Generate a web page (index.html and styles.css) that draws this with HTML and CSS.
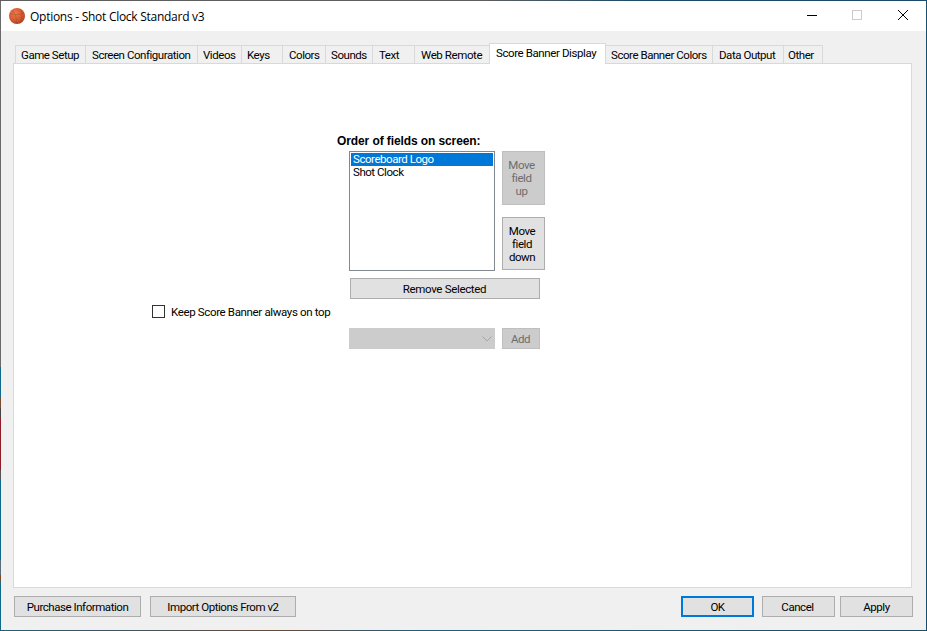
FILE: index.html
```html
<!DOCTYPE html>
<html lang="en">
<head>
<meta charset="utf-8">
<title>Options - Shot Clock Standard v3</title>
<link rel="stylesheet" href="styles.css">
</head>
<body>
<div class="window">
  <header class="titlebar">
    <svg class="app-icon" width="16" height="16" viewBox="0 0 16 16">
      <defs>
        <radialGradient id="ball" cx="0.4" cy="0.35" r="0.75">
          <stop offset="0" stop-color="#ec7d4f"/>
          <stop offset="0.65" stop-color="#d0542b"/>
          <stop offset="1" stop-color="#8f3a22"/>
        </radialGradient>
      </defs>
      <circle cx="8" cy="8" r="8" fill="url(#ball)"/>
      <path d="M1 5.5C5 7 11 7 15 4.5M3 2.5C7 6 8 11 7 15.5M12 1.5C13 6 13 11 11 15" fill="none" stroke="#9a4427" stroke-width="0.4"/>
    </svg>
    <span class="title">Options - Shot Clock Standard v3</span>
    <div class="caption">
      <svg class="cap cap-min" width="10" height="10" viewBox="0 0 10 10"><path d="M0 5.500H10" stroke="#000" stroke-width="1"/></svg>
      <svg class="cap cap-max" width="10" height="10" viewBox="0 0 10 10"><rect x="0.5" y="0.5" width="9" height="9" fill="none" stroke="#cccccc"/></svg>
      <svg class="cap cap-close" width="10" height="10" viewBox="0 0 10 10"><path d="M0 0L10 10M10 0L0 10" stroke="#000" stroke-width="1"/></svg>
    </div>
  </header>

  <main class="client">
    <nav class="tabs">
      <span class="tab t-game">Game Setup</span>
      <span class="tab t-screen">Screen Configuration</span>
      <span class="tab t-videos">Videos</span>
      <span class="tab t-keys">Keys</span>
      <span class="tab t-colors">Colors</span>
      <span class="tab t-sounds">Sounds</span>
      <span class="tab t-text">Text</span>
      <span class="tab t-web">Web Remote</span>
      <span class="tab tab-active t-display">Score Banner Display</span>
      <span class="tab t-bcolors">Score Banner Colors</span>
      <span class="tab t-data">Data Output</span>
      <span class="tab t-other">Other</span>
    </nav>

    <section class="panel">
      <div class="order-label">Order of fields on screen:</div>
      <div class="order-row">
        <div class="listbox">
          <div class="item item-selected">Scoreboard Logo</div>
          <div class="item">Shot Clock</div>
        </div>
        <div class="move-col">
          <button class="btn move move-up" disabled>Move<br>field<br>up</button>
          <button class="btn move move-down">Move<br>field<br>down</button>
        </div>
      </div>
      <button class="btn remove">Remove Selected</button>
      <label class="check-row"><span class="checkbox"></span><span>Keep Score Banner always on top</span></label>
      <div class="add-row">
        <div class="combo">
          <svg width="10" height="6" viewBox="0 0 10 6"><path d="M0.5 0.5L5 5L9.500 0.5" fill="none" stroke="#a6a6a6"/></svg>
        </div>
        <button class="btn add" disabled>Add</button>
      </div>
    </section>

    <footer class="footer">
      <button class="btn b-purchase">Purchase Information</button>
      <button class="btn b-import">Import Options From v2</button>
      <span class="spacer"></span>
      <button class="btn b-ok">OK</button>
      <button class="btn b-cancel">Cancel</button>
      <button class="btn b-apply">Apply</button>
    </footer>
  </main>
</div>
</body>
</html>
```

FILE: styles.css
```css
* { box-sizing: border-box; }
html, body { margin: 0; padding: 0; }
body {
  width: 927px;
  height: 631px;
  overflow: hidden;
  font-family: Roboto, "Liberation Sans", Arial, sans-serif;
  font-size: 11.5px;
  color: #000;
}
.window {
  width: 927px;
  height: 631px;
  display: flex;
  flex-direction: column;
  padding: 1px 1px 1px 1px;
  background-color: #f0f0f0;
  background-repeat: no-repeat;
  background-image:
    linear-gradient(90deg, #5e5e5e 0, #5e5e5e 480px, #1a4a68 640px, #1a4a68 100%),
    linear-gradient(90deg, #1c5f7c 0, #6b4a3a 30%, #1c5f7c 45%, #1a4f6c 100%),
    linear-gradient(180deg, #6a6a6a 0, #6a6a6a 367px, #12688a 367px, #12688a 398px, #7a4a2c 398px, #7a4a2c 408px, #444 408px, #444 418px, #8e1c26 418px, #8e1c26 470px, #555 470px, #555 480px, #12688a 480px, #12688a 560px, #5b6b78 560px, #5b6b78 575px, #7a4a2c 575px, #7a4a2c 582px, #12688a 582px, #12688a 100%),
    linear-gradient(180deg, #17506e 0, #17506e 100%);
  background-size: 100% 1px, 100% 1px, 1px 100%, 1px 100%;
  background-position: 0 0, 0 100%, 0 0, 100% 0;
}
.titlebar {
  height: 30px;
  flex: none;
  background: #fff;
  display: flex;
  align-items: center;
  padding-left: 8px;
}
.app-icon { flex: none; margin: 0 5px 1px 0; }
.title {
  font-family: "Open Sans", "Liberation Sans", sans-serif;
  font-size: 12px;
  letter-spacing: -0.27px;
}
.caption { margin: 0 0 2px auto; display: flex; align-items: center; }
.cap { display: block; }
.cap-min { margin-right: 35px; }
.cap-max { margin-right: 36px; }
.cap-close { margin-right: 18px; }

.client { flex: 1; display: flex; flex-direction: column; padding: 12px 14px 0 12px; min-height: 0; }
.tabs { display: flex; align-items: flex-end; height: 20px; flex: none; padding-left: 2px; position: relative; z-index: 1; }
.tab {
  height: 18px;
  line-height: 19px;
  padding-left: 5px;
  background: #f0f0f0;
  border: 1px solid #d9d9d9;
  border-bottom: 0;
  margin-right: -1px;
  white-space: nowrap;
  flex: none;
  letter-spacing: -0.45px;
}
.tab-active {
  height: 21px;
  background: #fff;
  line-height: 18px;
  margin-bottom: -1px;
}
.t-game { width: 71px; }
.t-screen { width: 113px; padding-left: 6px; }
.t-videos { width: 45px; }
.t-keys { width: 42px; }
.t-colors { width: 44px; padding-left: 6px; }
.t-sounds { width: 48px; }
.t-text { width: 43px; padding-left: 6px; }
.t-web { width: 76px; padding-left: 6px; letter-spacing: -0.4px; }
.t-display { width: 117px; padding-left: 6px; letter-spacing: -0.4px; }
.t-bcolors { width: 108px; }
.t-data { width: 72px; padding-left: 6px; }
.t-other { width: 40px; padding-left: 4px; }

.panel {
  height: 525px;
  flex: none;
  background: #fff;
  border: 1px solid #d9d9d9;
  display: flex;
  flex-direction: column;
  align-items: flex-start;
}
.order-label {
  margin: 70px 0 0 323px;
  height: 15px;
  line-height: 15px;
  font-family: "Liberation Sans", Arial, sans-serif;
  font-size: 12px;
  font-weight: bold;
  letter-spacing: -0.1px;
  white-space: nowrap;
}
.order-row { display: flex; margin: 2px 0 0 335px; gap: 7px; }
.listbox {
  width: 146px;
  height: 120px;
  background: #fff;
  border: 1px solid #828790;
  padding: 1px;
}
.item { height: 13px; line-height: 13px; padding-left: 2px; letter-spacing: -0.45px; }
.item-selected { background: #0078d7; color: #fff; }
.move-col { display: flex; flex-direction: column; gap: 12px; }
.btn {
  font: inherit;
  letter-spacing: -0.45px;
  color: #000;
  background: #e1e1e1;
  border: 1px solid #adadad;
  padding: 0;
  margin: 0;
  display: block;
  text-align: center;
  white-space: nowrap;
}
.btn:disabled { background: #cccccc; color: #6d6d6d; border-color: #bfbfbf; }
.move { width: 43px; height: 54px; line-height: 13px; padding-right: 4px; }
.move-down { height: 53px; padding-top: 1px; padding-right: 3px; }
.remove { width: 190px; height: 21px; margin: 7px 0 0 336px; padding-right: 1px; letter-spacing: -0.33px; }
.check-row { display: flex; align-items: center; margin: 6px 0 0 138px; height: 13px; letter-spacing: -0.35px; white-space: nowrap; }
.checkbox { width: 13px; height: 13px; border: 1px solid #333; background: #fff; margin-right: 6px; flex: none; }
.add-row { display: flex; margin: 10px 0 0 335px; gap: 7px; }
.combo {
  width: 146px;
  height: 21px;
  background: #cccccc;
  display: flex;
  align-items: center;
  justify-content: flex-end;
  padding-right: 3px;
}
.add { width: 38px; height: 21px; padding-right: 1px; }

.footer { display: flex; margin-top: 8px; padding-left: 1px; }
.footer .btn { height: 21px; flex: none; }
.b-purchase { width: 127px; margin-right: 9px; }
.b-import { width: 146px; }
.spacer { flex: 1; }
.footer .b-ok { width: 73px; border: 2px solid #0078d7; margin-right: 8px; }
.b-cancel { width: 73px; margin-right: 5px; padding-right: 2px; }
.b-apply { width: 73px; margin-right: -1px; }
```
